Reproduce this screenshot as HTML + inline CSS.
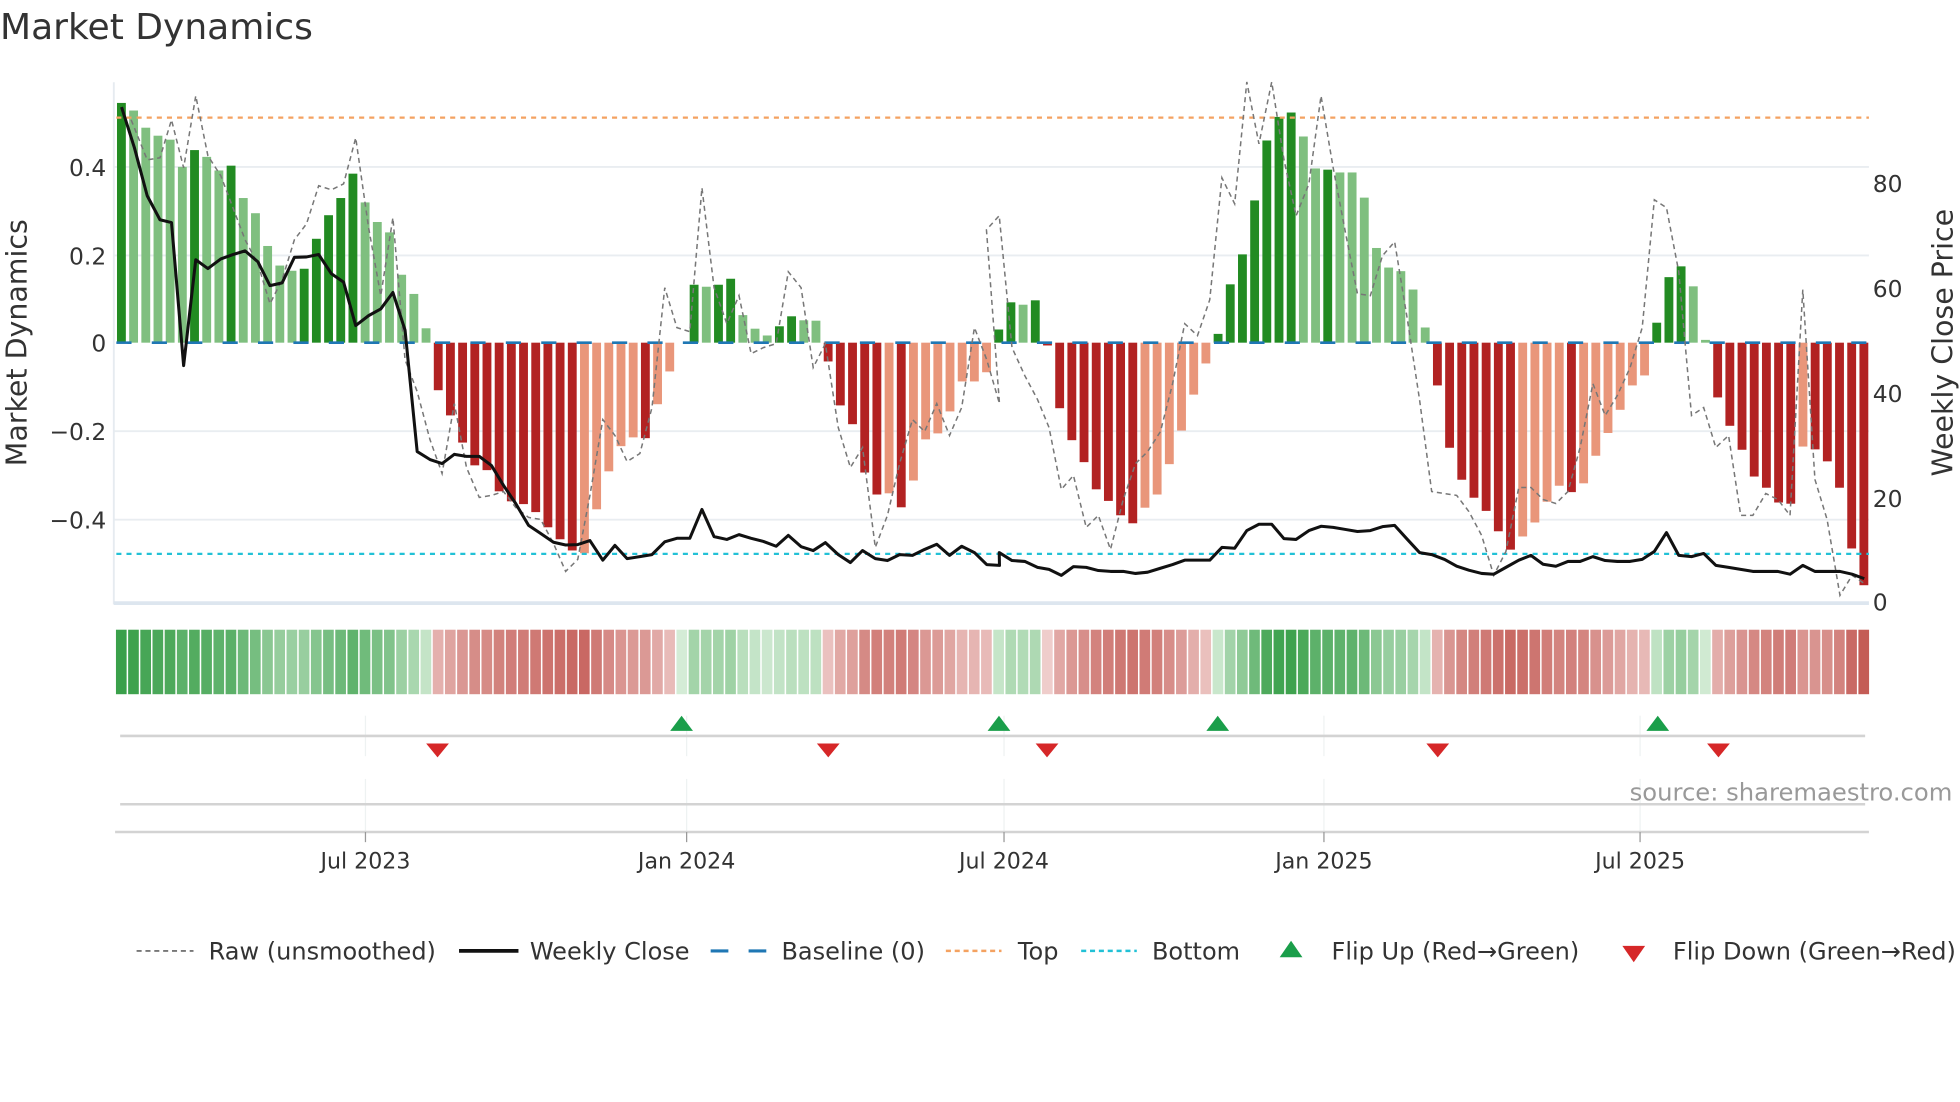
<!DOCTYPE html>
<html><head><meta charset="utf-8">
<style>
html,body{margin:0;padding:0;background:#fff;width:1960px;height:1102px;overflow:hidden}
svg{display:block}
text{font-family:"DejaVu Sans","Liberation Sans",sans-serif;fill:#333}
</style></head>
<body>
<svg id="s" width="1960" height="1102" viewBox="0 0 1550 871.5" xmlns="http://www.w3.org/2000/svg">
<rect width="1550" height="872" fill="#fff"/>
<text x="0" y="31" font-size="28.5" fill="#333">Market Dynamics</text>
<!-- grid -->
<g stroke="#e9edf1" stroke-width="1.5">
<line x1="90" x2="1478" y1="132" y2="132"/>
<line x1="90" x2="1478" y1="202" y2="202"/>
<line x1="90" x2="1478" y1="341" y2="341"/>
<line x1="90" x2="1478" y1="411" y2="411"/>
</g>
<line x1="90" x2="90" y1="65" y2="478" stroke="#e6ebf0" stroke-width="1.5"/>
<line x1="90" x2="1478" y1="477" y2="477" stroke="#dde6ef" stroke-width="3"/>
<g id="bars"></g>
<line x1="92" x2="1478" y1="271" y2="271" stroke="#1f77b4" stroke-width="2" stroke-dasharray="12,16"/>
<line x1="92" x2="1478" y1="93" y2="93" stroke="#f4a261" stroke-width="1.8" stroke-dasharray="4,4"/>
<line x1="92" x2="1478" y1="438" y2="438" stroke="#22c1d6" stroke-width="1.8" stroke-dasharray="4,4"/>
<polyline id="raw" fill="none" stroke="#777" stroke-width="1.2" stroke-dasharray="4,3"/>
<polyline id="close" fill="none" stroke="#111" stroke-width="2.4" stroke-linejoin="round"/>
<g font-size="18.5">
<text x="84" y="139" text-anchor="end">0.4</text>
<text x="84" y="209" text-anchor="end">0.2</text>
<text x="84" y="278" text-anchor="end">0</text>
<text x="84" y="348" text-anchor="end">−0.2</text>
<text x="84" y="418" text-anchor="end">−0.4</text>
<text x="1481" y="152">80</text>
<text x="1481" y="235">60</text>
<text x="1481" y="318">40</text>
<text x="1481" y="401">20</text>
<text x="1481" y="483">0</text>
</g>
<text transform="translate(21,271) rotate(-90)" text-anchor="middle" font-size="22.5">Market Dynamics</text>
<text transform="translate(1544,271) rotate(-90)" text-anchor="middle" font-size="22.5">Weekly Close Price</text>
<g id="heat"></g>
<!-- flip panel -->
<g stroke="#eef2f2" stroke-width="1">
<line x1="289" x2="289" y1="566" y2="598"/><line x1="543" x2="543" y1="566" y2="598"/><line x1="794" x2="794" y1="566" y2="598"/><line x1="1047" x2="1047" y1="566" y2="598"/><line x1="1297" x2="1297" y1="566" y2="598"/>
<line x1="289" x2="289" y1="616" y2="658"/><line x1="543" x2="543" y1="616" y2="658"/><line x1="794" x2="794" y1="616" y2="658"/><line x1="1047" x2="1047" y1="616" y2="658"/><line x1="1297" x2="1297" y1="616" y2="658"/>
</g>
<line x1="95" x2="1475" y1="582" y2="582" stroke="#d3d3d3" stroke-width="2"/>
<line x1="95" x2="1475" y1="636" y2="636" stroke="#d3d3d3" stroke-width="2"/>
<line x1="91" x2="1478" y1="658" y2="658" stroke="#d3d3d3" stroke-width="2"/>
<g stroke="#999" stroke-width="1"><line x1="289" x2="289" y1="658" y2="666"/><line x1="543" x2="543" y1="658" y2="666"/><line x1="794" x2="794" y1="658" y2="666"/><line x1="1047" x2="1047" y1="658" y2="666"/><line x1="1297" x2="1297" y1="658" y2="666"/></g>
<g id="flips"></g>
<text x="1544" y="633" text-anchor="end" font-size="19.2" style="fill:#999">source: sharemaestro.com</text>
<g font-size="17.5" text-anchor="middle">
<text x="289" y="687">Jul 2023</text><text x="543" y="687">Jan 2024</text><text x="794" y="687">Jul 2024</text><text x="1047" y="687">Jan 2025</text><text x="1297" y="687">Jul 2025</text>
</g>
<!-- legend -->
<g font-size="19">
<line x1="108" x2="153" y1="752" y2="752" stroke="#777" stroke-width="1.5" stroke-dasharray="4,3"/>
<text x="165" y="759">Raw (unsmoothed)</text>
<line x1="363" x2="410" y1="752" y2="752" stroke="#111" stroke-width="3"/>
<text x="419" y="759">Weekly Close</text>
<line x1="562" x2="606" y1="752" y2="752" stroke="#1f77b4" stroke-width="2.5" stroke-dasharray="14,16"/>
<text x="618" y="759">Baseline (0)</text>
<line x1="748" x2="792" y1="752" y2="752" stroke="#f4a261" stroke-width="2" stroke-dasharray="4,3"/>
<text x="805" y="759">Top</text>
<line x1="855" x2="899" y1="752" y2="752" stroke="#22c1d6" stroke-width="2" stroke-dasharray="4,3"/>
<text x="911" y="759">Bottom</text>
<polygon points="1021,744 1030,757 1012,757" fill="#1a9e4a"/>
<text x="1053" y="759">Flip Up (Red→Green)</text>
<polygon points="1283,748 1301,748 1292,761" fill="#d62728"/>
<text x="1323" y="759">Flip Down (Green→Red)</text>
</g>
</svg>
<script>
var NS="http://www.w3.org/2000/svg";
function el(t,a,p){var e=document.createElementNS(NS,t);for(var k in a)e.setAttribute(k,a[k]);p.appendChild(e);return e;}
var z1="D258 L277 L320 L340 L350 L418 D376 L393 L427 D415 L496 L534 L616 L665 L678 D673 D598 D539 D496 D435 L507 L556 L582 L688 L736 L822 R977 R1040 R1108 R1165 R1177 R1230 R1255 R1262 R1282 R1320 R1350 R1378 S1385 S1275 S1180 S1117 S1095 R1097 S1012 S930 S858 D713 L718 D713 D698 L789 L823 L840 D817 D792 L802 L803 R905 R1015 R1062 R1183 R1238 S1235 R1270 S1203 S1100 S1085 S1030 S955 S955 S932";
var z2="D825 D757 L763 D752 R865 R1022 R1102 R1157 R1225 R1254 R1290 R1310 S1271 S1238 S1162 S1078 S988 S910 D836 D712 D637 D502 D352 D293 D282 L342 L422 D425 L432 L432 L495 L621 L670 L679 L725 L820 R965 R1121 R1201 R1246 R1279 R1330 R1376 S1343 S1308 S1256 S1216 R1232 S1210 S1141 S1084 S1026 S965 S940 D808 D694 D667 L717 L851 R995 R1066 R1126 R1193 R1221 R1258 R1261 S1118 R1125 R1155 R1221 R1373 R1465";
var bars=(z1+" "+z2).split(" ").map(function(s){return {t:s[0],h:(858-parseFloat(s.slice(1)))*0.316};});
var col={D:"#228b22",L:"#7fbf7f",R:"#b22222",S:"#e9967a"};
var gb=document.getElementById("bars"),gh=document.getElementById("heat");
var n=bars.length,x0=96,dx=(1474-96)/(n-1);
var maxG=0,maxR=0;bars.forEach(function(b){if(b.h>maxG)maxG=b.h;if(-b.h>maxR)maxR=-b.h;});
function mix(a,b,t){var r=[];for(var i=0;i<3;i++)r.push(Math.round(a[i]+(b[i]-a[i])*t));return "rgb("+r.join(",")+")";}
bars.forEach(function(b,i){
 var x=x0+i*dx;var h=b.h;
 if(Math.abs(h)>0.3) el("rect",{x:x-3.5,y:h>0?271-h:271,width:7,height:Math.abs(h),fill:col[b.t]},gb);
 var c;
 if(h>=0){var t=Math.pow(h/maxG,0.8);c=mix([212,236,214],[58,160,74],t);}
 else{var t=Math.pow(-h/maxR,0.8);c=mix([240,208,206],[196,92,86],t);}
 el("rect",{x:x-dx/2+0.5,y:498,width:dx-1.2,height:51,fill:c},gh);
});
function pts(a,off){var o=[];for(var i=0;i<a.length;i+=2)o.push((off+a[i]*0.506).toFixed(1)+","+(a[i+1]*0.316).toFixed(1));return o;}
var c1=[190,268,210,370,230,490,250,550,268,557,287,915,306,650,325,672,345,648,364,637,383,628,403,655,422,715,441,708,460,644,479,643,498,637,518,685,537,706,556,815,576,790,595,773,614,732,633,826,652,1130,672,1150,691,1160,710,1137,729,1142,749,1142,768,1165,787,1215,806,1260,826,1315,845,1335,865,1357,884,1364,903,1363,922,1353,942,1402,961,1365,980,1398,1000,1393,1019,1388,1039,1356,1058,1347,1078,1347,1097,1275,1116,1343,1136,1350,1155,1338,1174,1347,1193,1355,1213,1367,1232,1340,1252,1368,1271,1378,1290,1358,1310,1388,1329,1408,1348,1378,1368,1398,1387,1403,1406,1388,1426,1390,1445,1375,1464,1362,1484,1390,1503,1367,1523,1383,1542,1413,1562,1415];
var c2=[30,1383,50,1403,70,1405,90,1420,108,1425,127,1440,146,1418,166,1420,185,1428,204,1430,224,1430,243,1435,262,1432,282,1422,301,1413,320,1402,340,1402,359,1402,378,1370,398,1372,417,1328,436,1312,456,1312,475,1348,494,1350,514,1328,533,1317,552,1320,571,1325,590,1330,610,1328,629,1318,648,1315,668,1350,687,1383,706,1388,726,1400,745,1417,764,1427,784,1435,803,1437,822,1420,842,1402,861,1390,880,1412,900,1417,919,1405,938,1405,958,1393,977,1403,996,1405,1016,1405,1035,1400,1054,1380,1073,1333,1092,1390,1112,1393,1131,1385,1150,1415,1170,1420,1189,1425,1208,1430,1228,1430,1247,1430,1266,1437,1286,1415,1305,1430,1324,1430,1344,1430,1363,1437,1382,1448];
document.getElementById("close").setAttribute("points",pts(c1,0).concat(pts(c2,775)).join(" "));
var r1=[205,300,230,400,250,395,268,300,287,420,306,240,325,390,345,440,364,520,383,600,403,660,422,760,441,700,460,600,479,560,498,465,518,475,537,460,556,345,576,570,595,740,614,545,633,900,652,980,672,1100,691,1185,710,1010,729,1170,749,1245,768,1240,787,1230,806,1270,826,1295,845,1300,865,1360,884,1430,903,1400,922,1240,942,1050,961,1090,980,1155,1000,1135,1019,1020,1039,720,1058,820,1078,830,1097,470,1116,720,1136,810,1155,740,1174,885,1193,870,1213,860,1232,680,1252,720,1271,920,1290,860,1310,1070,1329,1170,1348,1120,1368,1370,1387,1290,1406,1160,1426,1050,1445,1080,1464,1010,1484,1090,1503,1020,1523,820,1542,900,1562,1010];
var r2=[10,575,30,540,50,870,70,940,90,1000,108,1070,127,1225,146,1190,166,1320,185,1290,204,1375,224,1250,243,1160,262,1130,282,1080,301,960,320,810,340,840,359,750,378,445,398,510,417,205,436,360,456,205,475,400,494,540,514,460,533,240,552,420,571,580,590,735,610,740,629,640,648,605,668,800,687,1000,706,1230,726,1235,745,1240,764,1280,784,1340,803,1440,822,1380,842,1220,861,1220,880,1250,900,1260,919,1230,938,1120,958,960,977,1040,996,990,1016,920,1035,820,1054,500,1073,520,1092,680,1112,1040,1131,1020,1150,1120,1170,1090,1189,1290,1208,1290,1228,1235,1247,1250,1266,1290,1286,725,1305,1200,1324,1300,1344,1490,1363,1440,1382,1460];
document.getElementById("raw").setAttribute("points",pts(r1,0).concat(pts(r2,775)).join(" "));
var gf=document.getElementById("flips");
[539,790,963,1311].forEach(function(x){el("polygon",{points:(x)+",566 "+(x+9)+",578 "+(x-9)+",578",fill:"#1a9e4a"},gf);});
[346,655,828,1137,1359].forEach(function(x){el("polygon",{points:(x-9)+",588 "+(x+9)+",588 "+x+",599",fill:"#d62728"},gf);});
</script>
</body></html>
